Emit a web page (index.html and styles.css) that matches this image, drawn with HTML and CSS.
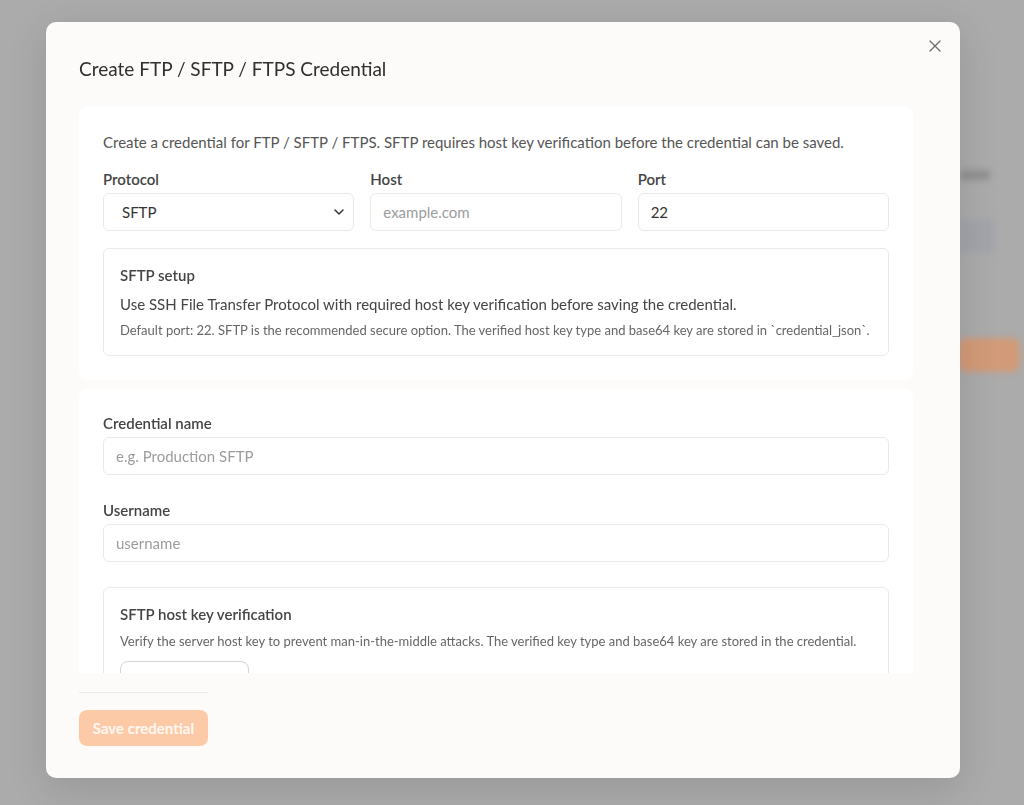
FILE: index.html
```html
<!DOCTYPE html>
<html lang="en">
<head>
    <meta charset="UTF-8">
    <meta name="viewport" content="width=device-width, initial-scale=1.0">
    <title>Create FTP / SFTP / FTPS Credential</title>
    <link rel="stylesheet" href="styles.css">
</head>
<body>
    <div class="page">
        <div class="page-panel">
            <div class="page-text"></div>
            <div class="page-field"></div>
            <div class="page-button"></div>
        </div>
    </div>

    <div class="overlay">
        <div class="modal">
            <button class="close-btn" aria-label="Close">
                <svg width="12" height="12" viewBox="0 0 12 12">
                    <path d="M1 1L11 11M11 1L1 11" stroke="#6b6b6b" stroke-width="1.3" stroke-linecap="round"/>
                </svg>
            </button>
            <h1 class="modal-title">Create FTP / SFTP / FTPS Credential</h1>

            <div class="modal-body">
                <div class="card">
                    <p class="intro">Create a credential for FTP / SFTP / FTPS. SFTP requires host key verification before the credential can be saved.</p>
                    <div class="row">
                        <div class="field">
                            <label for="protocol">Protocol</label>
                            <div class="select-wrap">
                                <select id="protocol">
                                    <option>SFTP</option>
                                    <option>FTP</option>
                                    <option>FTPS</option>
                                </select>
                                <svg class="chevron" width="10" height="6" viewBox="0 0 10 6">
                                    <path d="M1 1L5 5L9 1" fill="none" stroke="#333" stroke-width="1.5" stroke-linecap="round" stroke-linejoin="round"/>
                                </svg>
                            </div>
                        </div>
                        <div class="field">
                            <label for="host">Host</label>
                            <input type="text" id="host" placeholder="example.com">
                        </div>
                        <div class="field">
                            <label for="port">Port</label>
                            <input type="text" id="port" value="22">
                        </div>
                    </div>
                    <div class="info-box">
                        <h3>SFTP setup</h3>
                        <p class="info-main">Use SSH File Transfer Protocol with required host key verification before saving the credential.</p>
                        <p class="info-note">Default port: 22. SFTP is the recommended secure option. The verified host key type and base64 key are stored in `credential_json`.</p>
                    </div>
                </div>

                <div class="card">
                    <div class="field stacked">
                        <label for="credName">Credential name</label>
                        <input type="text" id="credName" placeholder="e.g. Production SFTP">
                    </div>
                    <div class="field stacked">
                        <label for="username">Username</label>
                        <input type="text" id="username" placeholder="username">
                    </div>
                    <div class="info-box">
                        <h3>SFTP host key verification</h3>
                        <p class="info-note">Verify the server host key to prevent man-in-the-middle attacks. The verified key type and base64 key are stored in the credential.</p>
                        <button class="outline-btn" aria-label="Fetch host key"></button>
                    </div>
                </div>
            </div>

            <div class="modal-footer">
                <button class="save-btn" disabled>Save credential</button>
            </div>
        </div>
    </div>
</body>
</html>
```

FILE: styles.css
```css
* {
    box-sizing: border-box;
}
body {
    font-family: Lato, "Noto Sans", sans-serif;
    margin: 0;
    background-color: #ababab;
    height: 805px;
    overflow: hidden;
}
.page {
    height: 100%;
    display: flex;
    justify-content: flex-end;
    filter: blur(3px);
}
.page-panel {
    width: 66px;
    padding-top: 170px;
}
.page-text {
    width: 30px;
    height: 10px;
    margin-left: 2px;
    background: #909090;
    border-radius: 4px;
}
.page-field {
    width: 36px;
    height: 32px;
    margin-top: 40px;
    background: #a2a4aa;
    border-radius: 4px;
}
.page-button {
    width: 62px;
    height: 34px;
    margin-top: 86px;
    background: #d29a78;
    border-radius: 8px;
}
.overlay {
    position: fixed;
    inset: 0;
    padding: 22px 0 0 46px;
}
.modal {
    position: relative;
    width: 914px;
    height: 756px;
    background: #fdfbf9;
    border-radius: 10px;
    padding: 33px 47px 32px 33px;
    box-shadow: 0 10px 40px rgba(0,0,0,0.12);
    display: flex;
    flex-direction: column;
}
.close-btn {
    position: absolute;
    top: 14px;
    right: 15px;
    width: 20px;
    height: 20px;
    border: none;
    background: none;
    padding: 4px;
    display: flex;
    cursor: pointer;
}
.modal-title {
    margin: 0;
    font-size: 19px;
    line-height: 28px;
    font-weight: 400;
    color: #2f2f2f;
}
.modal-body {
    margin-top: 24px;
    height: 566px;
    overflow: hidden;
    display: flex;
    flex-direction: column;
    gap: 9px;
}
.card {
    background: #fff;
    border-radius: 8px;
    padding: 24px;
    flex-shrink: 0;
}
.intro {
    margin: 0 0 16px;
    font-size: 15px;
    line-height: 22px;
    color: #555;
}
.row {
    display: grid;
    grid-template-columns: 1fr 1fr 1fr;
    gap: 16px;
}
.field label {
    display: block;
    font-size: 15px;
    line-height: 20px;
    font-weight: 600;
    color: #444;
    margin-bottom: 4px;
}
.field.stacked {
    margin-bottom: 25px;
}
input[type="text"],
select {
    width: 100%;
    height: 38px;
    border: 1px solid #ebe9e6;
    border-radius: 6px;
    background: #fff;
    padding: 0 12px;
    font-family: inherit;
    font-size: 15px;
    color: #333;
}
input::placeholder {
    color: #9c9c9c;
}
.select-wrap {
    position: relative;
}
select {
    appearance: none;
    padding-left: 18px;
}
.chevron {
    position: absolute;
    right: 10px;
    top: 16px;
    pointer-events: none;
}
.info-box {
    margin-top: 17px;
    border: 1px solid #ebe9e6;
    border-radius: 6px;
    padding: 15px 16px 15px;
}
.card:last-child .info-box {
    margin-top: 0;
}
.info-box h3 {
    margin: 0;
    font-size: 15px;
    line-height: 22px;
    font-weight: 600;
    color: #444;
}
.info-main {
    margin: 7px 0 5px;
    font-size: 15px;
    line-height: 22px;
    color: #444;
}
.info-note {
    margin: 0;
    font-size: 13px;
    line-height: 20px;
    color: #666;
}
.info-box h3 + .info-note {
    margin-top: 6px;
}
.outline-btn {
    display: block;
    margin-top: 10px;
    width: 129px;
    height: 36px;
    border: 1px solid #d6d4d1;
    border-radius: 8px;
    background: #fff;
}
.modal-footer {
    margin-top: 19px;
    align-self: flex-start;
    border-top: 1px solid #ece9e6;
    padding-top: 17px;
}
.save-btn {
    width: 129px;
    height: 36px;
    border: none;
    border-radius: 8px;
    background: #fdcaa8;
    color: #fff8f2;
    font-family: inherit;
    font-size: 15px;
    font-weight: 700;
}
```
